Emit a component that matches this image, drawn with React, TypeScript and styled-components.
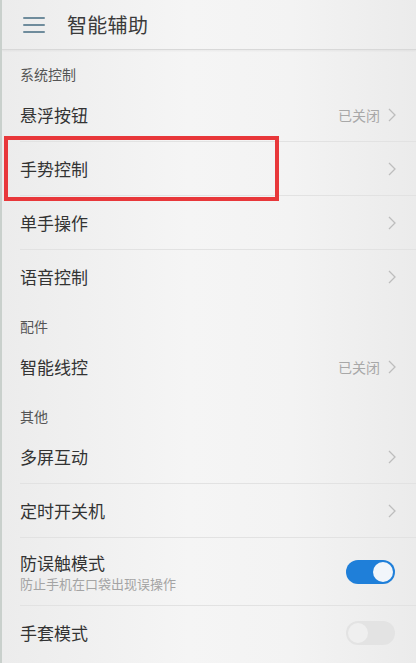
import React from "react";
import styled, { createGlobalStyle } from "styled-components";

const GlobalStyle = createGlobalStyle`
  html, body {
    margin: 0;
    padding: 0;
    background: #efefef;
    font-family: "Noto Sans CJK SC", "Noto Sans", sans-serif;
  }
`;

const Screen = styled.div`
  width: 416px;
  height: 663px;
  overflow: hidden;
  background: linear-gradient(90deg, #ececec 0%, #f5f5f5 45%, #f3f3f3 70%, #ebebeb 100%);
  border-left: 2px solid #c9d0cc;
  box-sizing: border-box;
`;

const Header = styled.div`
  height: 49px;
  display: flex;
  align-items: center;
  padding-left: 21px;
  gap: 22px;
  border-bottom: 1px solid #d8d8d8;
  box-shadow: 0 1px 2px rgba(0, 0, 0, 0.05);
`;

const Title = styled.div`
  font-size: 20px;
  color: #3a3a3a;
  letter-spacing: 0.3px;
`;

const SectionLabel = styled.div<{ $first?: boolean }>`
  height: ${(p) => (p.$first ? 38 : 36)}px;
  padding: ${(p) => (p.$first ? 14 : 12)}px 0 0 18px;
  box-sizing: border-box;
  font-size: 14px;
  color: #555;
  line-height: 20px;
`;

const Row = styled.div<{ $tall?: boolean; $last?: boolean }>`
  height: ${(p) => (p.$tall ? 68 : 54)}px;
  margin: 0 0 0 18px;
  padding-right: 20px;
  display: flex;
  align-items: center;
  justify-content: space-between;
  border-bottom: ${(p) => (p.$last ? "none" : "1px solid #e2e2e2")};
  box-sizing: border-box;
`;

const Highlighted = styled.div`
  position: relative;
`;

const RedBox = styled.div`
  position: absolute;
  left: 2px;
  top: -6px;
  width: 275px;
  height: 65px;
  border: 4px solid #e8373a;
  box-sizing: border-box;
  pointer-events: none;
`;

const Texts = styled.div`
  display: flex;
  flex-direction: column;
`;

const Label = styled.div`
  font-size: 17px;
  color: #333;
  line-height: 24px;
`;

const Sub = styled.div`
  font-size: 13px;
  color: #a4a4a4;
  line-height: 18px;
`;

const Right = styled.div`
  display: flex;
  align-items: center;
  gap: 8px;
`;

const Status = styled.span`
  font-size: 14px;
  color: #a8a8a8;
`;

const Toggle = styled.div<{ $on?: boolean }>`
  width: 49px;
  height: 24px;
  border-radius: 12px;
  background: ${(p) => (p.$on ? "#1f7fd9" : "#e3e3e3")};
  display: flex;
  align-items: center;
  justify-content: ${(p) => (p.$on ? "flex-end" : "flex-start")};
  padding: 0 2px;
  box-sizing: border-box;
  margin-right: 1px;
`;

const Knob = styled.div<{ $on?: boolean }>`
  width: 20px;
  height: 20px;
  border-radius: 50%;
  background: ${(p) => (p.$on ? "#f2f6fb" : "#efefef")};
`;

const Menu = () => (
  <svg width="22" height="18" viewBox="0 0 22 18">
    <g stroke="#6f8c9c" strokeWidth="2" strokeLinecap="round">
      <line x1="1" y1="2" x2="21" y2="2" />
      <line x1="1" y1="9" x2="21" y2="9" />
      <line x1="1" y1="16" x2="21" y2="16" />
    </g>
  </svg>
);

const Chevron = () => (
  <svg width="8" height="14" viewBox="0 0 8 14">
    <polyline points="1,1 7,7 1,13" fill="none" stroke="#bdbdbd" strokeWidth="1.3" />
  </svg>
);

type Item = { label: string; status?: string; last?: boolean };

const NavRow = ({ label, status, last }: Item) => (
  <Row $last={last}>
    <Label>{label}</Label>
    <Right>
      {status && <Status>{status}</Status>}
      <Chevron />
    </Right>
  </Row>
);

export default function App() {
  return (
    <>
      <GlobalStyle />
      <Screen>
        <Header>
          <Menu />
          <Title>智能辅助</Title>
        </Header>

        <SectionLabel $first>系统控制</SectionLabel>
        <NavRow label="悬浮按钮" status="已关闭" />
        <Highlighted>
          <RedBox />
          <NavRow label="手势控制" />
        </Highlighted>
        <NavRow label="单手操作" />
        <NavRow label="语音控制" last />

        <SectionLabel>配件</SectionLabel>
        <NavRow label="智能线控" status="已关闭" last />

        <SectionLabel>其他</SectionLabel>
        <NavRow label="多屏互动" />
        <NavRow label="定时开关机" />
        <Row $tall>
          <Texts>
            <Label>防误触模式</Label>
            <Sub>防止手机在口袋出现误操作</Sub>
          </Texts>
          <Toggle $on>
            <Knob $on />
          </Toggle>
        </Row>
        <Row $last>
          <Label>手套模式</Label>
          <Toggle>
            <Knob />
          </Toggle>
        </Row>
      </Screen>
    </>
  );
}
